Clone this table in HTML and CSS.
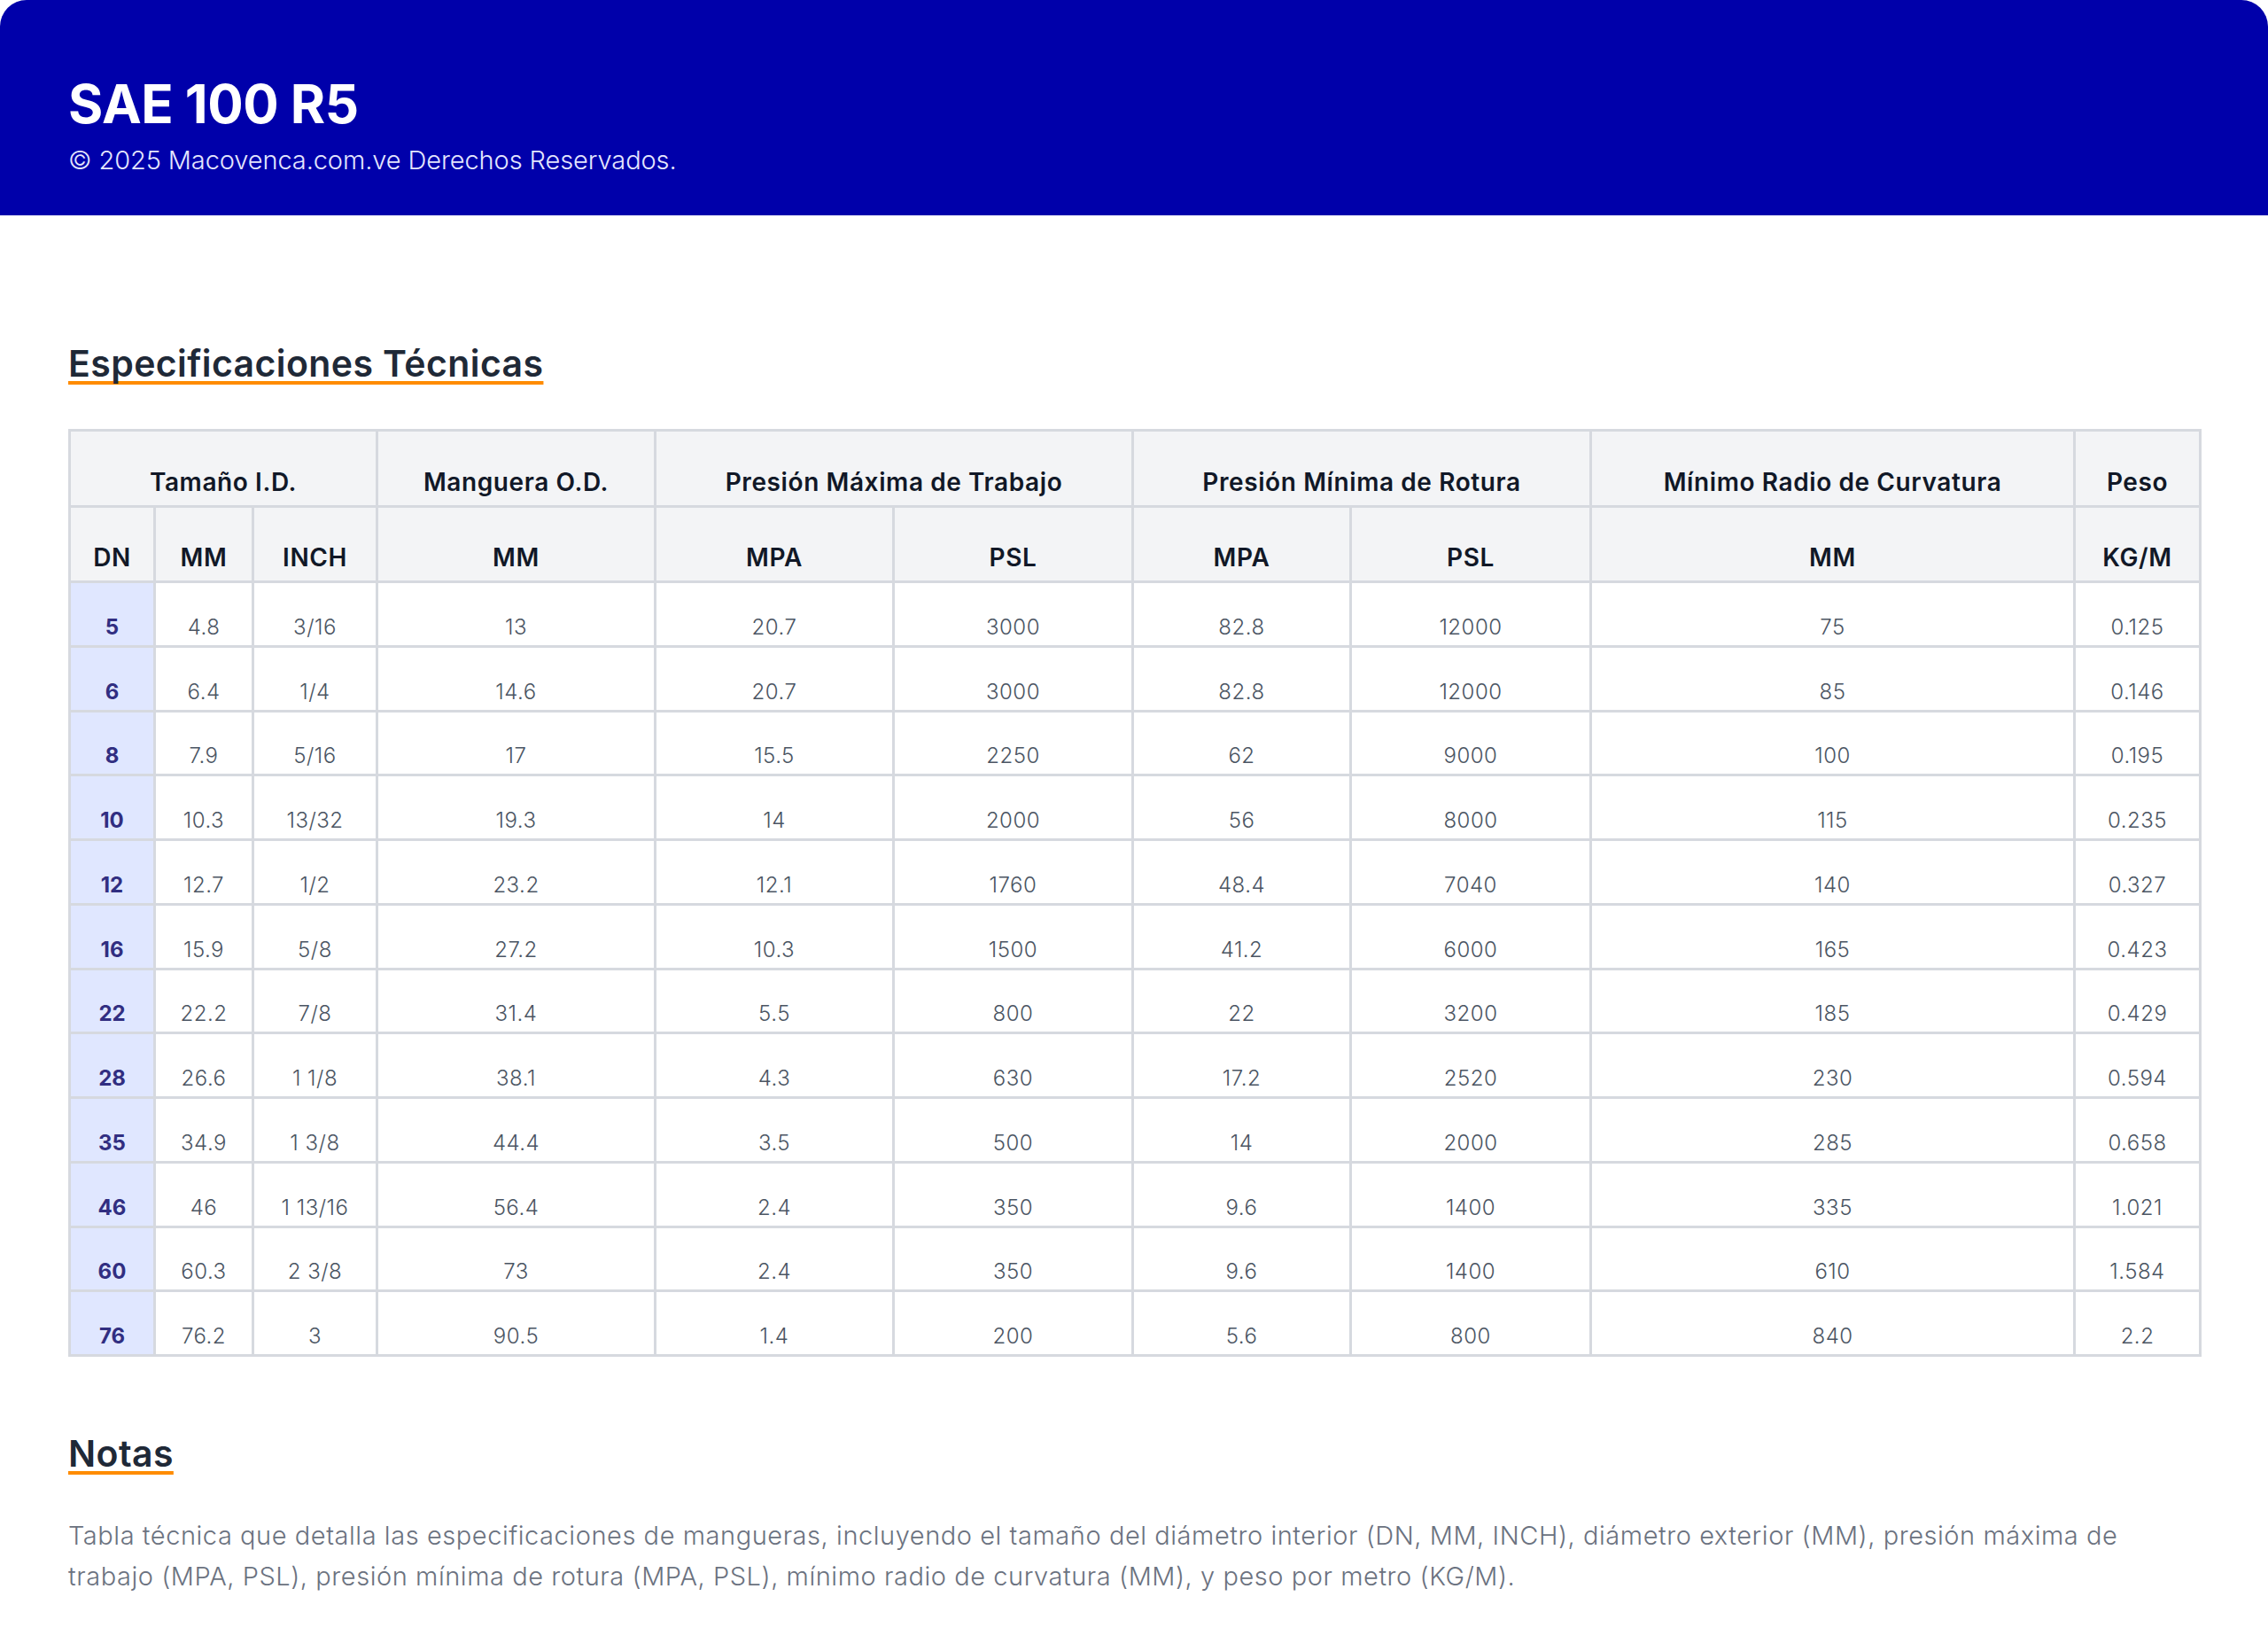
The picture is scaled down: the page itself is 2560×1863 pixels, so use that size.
FILE: index.html
```html
<!DOCTYPE html>
<html lang="es">
<head>
<meta charset="utf-8">
<title>SAE 100 R5</title>
<link rel="stylesheet" href="styles.css">
</head>
<body>
<header class="hero">
  <h1 class="hero-title">SAE 100 R5</h1>
  <p class="hero-sub">© 2025 Macovenca.com.ve Derechos Reservados.</p>
</header>
<main class="content">
  <section class="specs">
    <h2 class="section-title">Especificaciones Técnicas</h2>
    <table class="spec-table">
      <colgroup>
        <col class="c-dn"><col class="c-mm"><col class="c-inch"><col class="c-od">
        <col class="c-mpa1"><col class="c-psl1"><col class="c-mpa2"><col class="c-psl2">
        <col class="c-rad"><col class="c-kg">
      </colgroup>
      <thead>
        <tr>
          <th colspan="3">Tamaño I.D.</th>
          <th>Manguera O.D.</th>
          <th colspan="2">Presión Máxima de Trabajo</th>
          <th colspan="2">Presión Mínima de Rotura</th>
          <th>Mínimo Radio de Curvatura</th>
          <th>Peso</th>
        </tr>
        <tr>
          <th>DN</th><th>MM</th><th>INCH</th><th>MM</th>
          <th>MPA</th><th>PSL</th><th>MPA</th><th>PSL</th>
          <th>MM</th><th>KG/M</th>
        </tr>
      </thead>
      <tbody>
        <tr><td class="dn">5</td><td>4.8</td><td>3/16</td><td>13</td><td>20.7</td><td>3000</td><td>82.8</td><td>12000</td><td>75</td><td>0.125</td></tr>
        <tr><td class="dn">6</td><td>6.4</td><td>1/4</td><td>14.6</td><td>20.7</td><td>3000</td><td>82.8</td><td>12000</td><td>85</td><td>0.146</td></tr>
        <tr><td class="dn">8</td><td>7.9</td><td>5/16</td><td>17</td><td>15.5</td><td>2250</td><td>62</td><td>9000</td><td>100</td><td>0.195</td></tr>
        <tr><td class="dn">10</td><td>10.3</td><td>13/32</td><td>19.3</td><td>14</td><td>2000</td><td>56</td><td>8000</td><td>115</td><td>0.235</td></tr>
        <tr><td class="dn">12</td><td>12.7</td><td>1/2</td><td>23.2</td><td>12.1</td><td>1760</td><td>48.4</td><td>7040</td><td>140</td><td>0.327</td></tr>
        <tr><td class="dn">16</td><td>15.9</td><td>5/8</td><td>27.2</td><td>10.3</td><td>1500</td><td>41.2</td><td>6000</td><td>165</td><td>0.423</td></tr>
        <tr><td class="dn">22</td><td>22.2</td><td>7/8</td><td>31.4</td><td>5.5</td><td>800</td><td>22</td><td>3200</td><td>185</td><td>0.429</td></tr>
        <tr><td class="dn">28</td><td>26.6</td><td>1 1/8</td><td>38.1</td><td>4.3</td><td>630</td><td>17.2</td><td>2520</td><td>230</td><td>0.594</td></tr>
        <tr><td class="dn">35</td><td>34.9</td><td>1 3/8</td><td>44.4</td><td>3.5</td><td>500</td><td>14</td><td>2000</td><td>285</td><td>0.658</td></tr>
        <tr><td class="dn">46</td><td>46</td><td>1 13/16</td><td>56.4</td><td>2.4</td><td>350</td><td>9.6</td><td>1400</td><td>335</td><td>1.021</td></tr>
        <tr><td class="dn">60</td><td>60.3</td><td>2 3/8</td><td>73</td><td>2.4</td><td>350</td><td>9.6</td><td>1400</td><td>610</td><td>1.584</td></tr>
        <tr><td class="dn">76</td><td>76.2</td><td>3</td><td>90.5</td><td>1.4</td><td>200</td><td>5.6</td><td>800</td><td>840</td><td>2.2</td></tr>
      </tbody>
    </table>
  </section>
  <section class="notes">
    <h2 class="section-title">Notas</h2>
    <p class="notes-text">Tabla técnica que detalla las especificaciones de mangueras, incluyendo el tamaño del diámetro interior (DN, MM, INCH), diámetro exterior (MM), presión máxima de trabajo (MPA, PSL), presión mínima de rotura (MPA, PSL), mínimo radio de curvatura (MM), y peso por metro (KG/M).</p>
  </section>
</main>
</body>
</html>
```

FILE: styles.css
```css
* { box-sizing: border-box; }

html, body {
  margin: 0;
  padding: 0;
  background: #ffffff;
}

body {
  font-family: Inter, "Noto Sans", "Liberation Sans", sans-serif;
  color: #1f2937;
}

.hero {
  background: #0000aa;
  border-radius: 30px 30px 0 0;
  height: 243px;
  padding: 86px 77px 0;
  color: #ffffff;
}

.hero-title {
  margin: 0;
  font-size: 60px;
  line-height: 62px;
  font-weight: 700;
  letter-spacing: -0.5px;
}

.hero-sub {
  margin: 13px 0 0;
  font-size: 29px;
  line-height: 40px;
  font-weight: 300;
  color: #e4e6ff;
  letter-spacing: -0.1px;
}

.content {
  padding: 0 78px 0 77px;
}

.section-title {
  margin: 0;
  display: inline-block;
  font-size: 41px;
  line-height: 47px;
  font-weight: 600;
  color: #1f2937;
  text-decoration: underline;
  text-decoration-color: #ff8c00;
  text-decoration-thickness: 4px;
  text-underline-offset: 5px;
  text-decoration-skip-ink: none;
  letter-spacing: 0.4px;
}

.specs {
  padding-top: 144px;
}

.spec-table {
  margin-top: 50px;
  width: 100%;
  table-layout: fixed;
  border-collapse: collapse;
  border: 3px solid #d6d9df;
}

.c-dn { width: 96px; }
.c-mm { width: 111px; }
.c-inch { width: 140px; }
.c-od { width: 314px; }
.c-mpa1 { width: 269px; }
.c-psl1 { width: 270px; }
.c-mpa2 { width: 246px; }
.c-psl2 { width: 271px; }
.c-rad { width: 546px; }
.c-kg { width: 142px; }

.spec-table th,
.spec-table td {
  border: 3px solid #d6d9df;
  text-align: center;
  vertical-align: bottom;
  padding: 0 4px;
}

.spec-table thead tr { height: 85.5px; }

.spec-table th {
  background: #f3f4f6;
  color: #111827;
  font-size: 28px;
  line-height: 38px;
  font-weight: 600;
  letter-spacing: 0.6px;
  padding-bottom: 7px;
}

.spec-table tbody tr { height: 72.75px; }

.spec-table td {
  color: #4b5563;
  font-size: 24px;
  line-height: 34px;
  font-weight: 300;
  letter-spacing: 0.5px;
  padding-bottom: 3px;
}

.spec-table td.dn {
  background: #e0e7ff;
  color: #312e81;
  font-weight: 700;
  letter-spacing: 0;
}

.notes {
  padding-top: 86px;
}

.notes-text {
  margin: 46px 0 0;
  max-width: 2385px;
  font-size: 29px;
  line-height: 46px;
  font-weight: 300;
  color: #6b7280;
  letter-spacing: 0.55px;
}
```
